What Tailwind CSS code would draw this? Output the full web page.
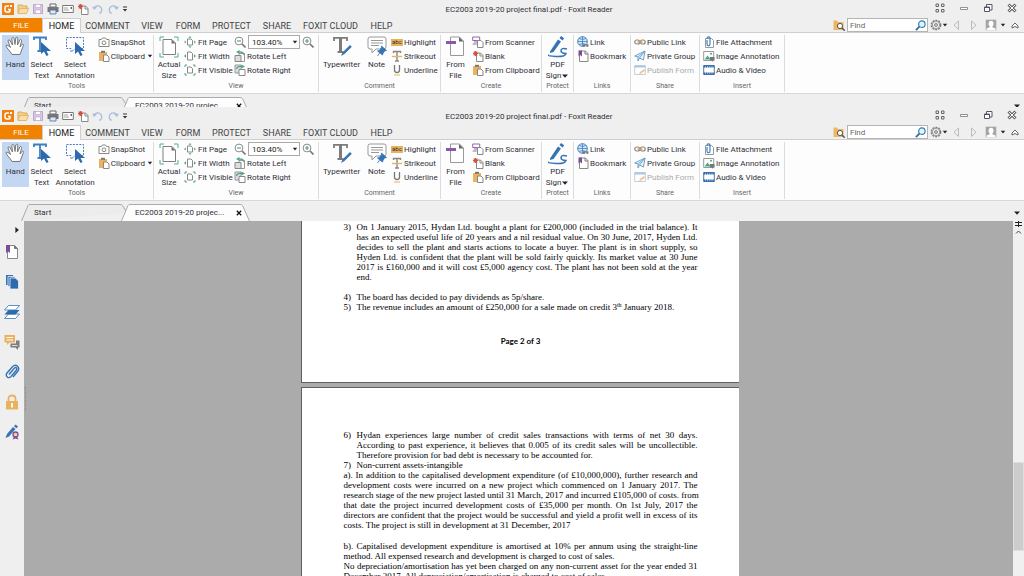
<!DOCTYPE html>
<html lang="en">
<head>
    <meta charset="UTF-8">
    <meta name="viewport" content="width=device-width, initial-scale=1.0">
    <title>EC2003 2019-20 project final.pdf - Foxit Reader</title>
    <script src="https://cdn.jsdelivr.net/npm/@tailwindcss/browser@4"></script>
</head>
<body class="h-screen flex flex-col overflow-hidden bg-[#efefef] text-[#303038] text-[8px] leading-[11px] font-['Roboto','Noto_Sans',sans-serif]">

    <!-- icon set -->
    <svg class="hidden">
        <symbol id="i-logo" viewBox="0 0 12 12"><rect width="12" height="12" fill="#f08010"/><path d="M7 3H5Q3 3 3 5v2q0 2 2 2h2q1 0 1-1V6.500H6" fill="none" stroke="#fff" stroke-width="1.500"/><path d="M8 2h2v2H8z" fill="#fff"/></symbol>
        <symbol id="i-open" viewBox="0 0 12 12"><path d="M1 10V2h4l1 1h4v2" fill="#f3d08c" stroke="#dca951"/><path d="M1 10.500L3 5.500h8.500L9.500 10.500z" fill="#f8e0ae" stroke="#e6b565"/></symbol>
        <symbol id="i-save" viewBox="0 0 12 12"><path d="M1.500 1.500h9v9h-9z" fill="#d9c8e2" stroke="#bda5cb"/><path d="M3.500 1.500h5v3h-5zM3.500 7h5v3.500h-5z" fill="#fff" stroke="#bda5cb" stroke-width=".6"/></symbol>
        <symbol id="i-print" viewBox="0 0 12 12"><path d="M3 1h6v3H3z" fill="#fff" stroke="#666"/><path d="M.5 4h11v5H.5z" fill="#777"/><path d="M3 7h6v4H3z" fill="#d8e8f8" stroke="#4d6f94" stroke-width=".8"/></symbol>
        <symbol id="i-mail" viewBox="0 0 12 12"><path d="M.7 2.500h10.600v7H.7z" fill="#fff" stroke="#777"/><path d="M2 5h4M2 7h5" stroke="#888" stroke-width=".8"/><path d="M8.500 4h1.500v2H8.500z" fill="#666"/></symbol>
        <symbol id="i-blank" viewBox="0 0 12 12"><path d="M4.500 3h4l2.500 2.500v6H4.500z" fill="#fff" stroke="#888"/><path d="M8 3v3h3" fill="none" stroke="#888"/><path d="M3.500 1v5M1 3.500h5M1.700 1.700l3.600 3.600M5.300 1.700L1.700 5.300" stroke="#d65240" stroke-width="1.200"/></symbol>
        <symbol id="i-undo" viewBox="0 0 12 12"><path d="M2 5.500A4 4 0 1 1 7.500 10.500" fill="none" stroke="#a9bfdb" stroke-width="1.400"/><path d="M0 3.500l2 3.500 3-2.500z" fill="#a9bfdb"/></symbol>
        <symbol id="i-hand" viewBox="0 0 20 20"><path d="M7 18.500C5 15 2 12.500 1 10c0-1.500 2-1 4.500 1.500L3 5c0-1.500 1.800-1.500 2.300 0L7.500 9 6.800 2.500c.2-1.500 1.900-1.300 2.200 0L10 8.500l.8-6.500c.3-1.200 2-1 2 .3L12.500 9l2.300-5c.7-1.100 2-.5 1.800.8L15 11l2-2.500c1-.8 2-.1 1.400 1L15 18.500z" fill="#fff" stroke="#777"/></symbol>
        <symbol id="i-text" viewBox="0 0 20 20"><path d="M2 4V1.500h12V4M8 1.500V15M5.500 15h5" fill="none" stroke="#3f7fc0" stroke-width="1.800"/><path d="M9 6v12l3-2.500L14.500 20l2-1-2-4H19z" fill="#2c69ad"/></symbol>
        <symbol id="i-annot" viewBox="0 0 20 20"><path d="M1.500 1.500h17v11h-8L6 16v-3.500H1.500z" fill="none" stroke="#3f7fc0" stroke-dasharray="2 1.200"/><path d="M10 6v12l3-2.500L15.500 20l2-1-2-4H20z" fill="#2c69ad"/></symbol>
        <symbol id="i-camera" viewBox="0 0 12 12"><path d="M1 3.500h2.500L4.500 2h3l1 1.500H11v7H1z" fill="#fff" stroke="#888"/><circle cx="6" cy="6.800" r="1.900" fill="none" stroke="#888"/></symbol>
        <symbol id="i-clip" viewBox="0 0 12 12"><path d="M1 2h8v9H1z" fill="#eab25f"/><path d="M3 .8h4v2H3z" fill="#777"/><path d="M5.500 5h3.500l2 2v4.500H5.500z" fill="#fff" stroke="#888"/></symbol>
        <symbol id="i-actual" viewBox="0 0 20 22"><path d="M1 5V1h4M15 1h4v4M19 17v4h-4M5 21H1v-4" fill="none" stroke="#58ad90"/><path d="M4 3.500h9l3.500 3.500v11.500H4z" fill="#fff" stroke="#808080"/><path d="M12.500 3.500L16.500 7.500h-4z" fill="#707070"/></symbol>
        <symbol id="i-fitpage" viewBox="0 0 12 12"><path d="M3.500 3h3.500l1.500 1.500V9h-5z" fill="#fff" stroke="#888"/><path d="M6 0l1.500 1.800h-3zM6 12l1.500-1.800h-3zM0 6l1.800-1.500v3zM12 6l-1.800-1.500v3z" fill="#4fa58a"/></symbol>
        <symbol id="i-fitwidth" viewBox="0 0 12 12"><path d="M3.500 2h3.500l1.500 1.500V10h-5z" fill="#fff" stroke="#888"/><path d="M0 6l2-1.800v3.600zM12 6l-2-1.800v3.600z" fill="#4fa58a"/></symbol>
        <symbol id="i-fitvis" viewBox="0 0 12 12"><path d="M3.500 3h3.500l1.500 1.500V9h-5z" fill="#fff" stroke="#888"/><path d="M1 3V1h2M9 1h2v2M11 9v2H9M3 11H1V9" fill="none" stroke="#4fa58a"/></symbol>
        <symbol id="i-zoomout" viewBox="0 0 12 12"><circle cx="5" cy="5" r="3.900" fill="#fff" stroke="#8a8a8a"/><path d="M8 8l3.500 3.500" stroke="#777" stroke-width="1.600"/><path d="M3 5h4" stroke="#4fa58a" stroke-width="1.200"/></symbol>
        <symbol id="i-zoomin" viewBox="0 0 12 12"><circle cx="5" cy="5" r="3.900" fill="#fff" stroke="#8a8a8a"/><path d="M8 8l3.500 3.500" stroke="#777" stroke-width="1.600"/><path d="M3 5h4M5 3v4" stroke="#4fa58a" stroke-width="1.200"/></symbol>
        <symbol id="i-rotleft" viewBox="0 0 12 12"><path d="M5 3.500h5.500v8H5z" fill="#fff" stroke="#999"/><path d="M1 5.500h6v6H1z" fill="#ddd" stroke="#888"/><path d="M10.500 5Q9 1.500 4.500 2" fill="none" stroke="#4fa58a" stroke-width="1.300"/><path d="M5.500 0v4L2 2z" fill="#4fa58a"/></symbol>
        <symbol id="i-rotright" viewBox="0 0 12 12"><path d="M1 1h6v8H1z" fill="#ddd" stroke="#999"/><path d="M5 5.500h6v6H5z" fill="#fff" stroke="#888"/><path d="M2.500 5Q3 2 8 2.500" fill="none" stroke="#4fa58a" stroke-width="1.300"/><path d="M7.500.5v4L11 2.500z" fill="#4fa58a"/></symbol>
        <symbol id="i-type" viewBox="0 0 20 20"><path d="M2 5V1.800h13V5M5.500 16h6" fill="none" stroke="#7c7c7c" stroke-width="1.800"/><path d="M8.500 1.500v15" stroke="#7c7c7c" stroke-width="3"/><path d="M9 20l1.500-3.500L18 9l1.800 1.800L12.500 18z" fill="#3573b5"/></symbol>
        <symbol id="i-note" viewBox="0 0 20 20"><path d="M3 1h14q2 0 2 2v8q0 2-2 2H9l-4 4v-4H3q-2 0-2-2V3q0-2 2-2z" fill="#fff" stroke="#999"/><path d="M4 4.500h12M4 7h12M4 9.500h8" stroke="#999"/><path d="M14.500 10l5 4.500-2 .5-1.500 2.500L15.500 19l-5-4 1.800-.4 2-2.600zM13 16.500L10.500 20" fill="#3573b5" stroke="#3573b5" stroke-width=".8"/></symbol>
        <symbol id="i-strike" viewBox="0 0 12 12"><path d="M2.500 3V1.500h7V3M6 1.500V11M4 11h4" fill="none" stroke="#888" stroke-width="1.400"/><path d="M1 6.500h10" stroke="#eab25f" stroke-width="1.400"/></symbol>
        <symbol id="i-under" viewBox="0 0 12 12"><path d="M3.500 1v5q0 2.500 2.500 2.500T8.500 6V1" fill="none" stroke="#777" stroke-width="1.300"/><path d="M3 11h6" stroke="#eab25f"/></symbol>
        <symbol id="i-fromfile" viewBox="0 0 20 20"><path d="M4.500 1h9l4 4v14.500h-13z" fill="#fff" stroke="#999"/><path d="M13 1v4.500h4.500z" fill="#666"/><path d="M0 5h10v3H0z" fill="#8b59ab"/></symbol>
        <symbol id="i-scan" viewBox="0 0 12 12"><path d="M.7 1h7v3.500h-7zM2 6h3M.7 8h4" fill="#fff" stroke="#9464b2"/><path d="M5.500 4.500h3.500l2 2v5H5.500z" fill="#fff" stroke="#888"/></symbol>
        <symbol id="i-sign" viewBox="0 0 20 22"><path d="M2 15.500L10 3.500l3 2L5.500 16 2 17z" fill="#3573b5"/><path d="M11.500 2L13 0l3.200 2.200L14.500 4.500z" fill="#3573b5"/><path d="M19 13q-6-1.500-6 1.500t5 3Q17 21 8 20.500T1 19" fill="none" stroke="#3573b5" stroke-width="1.500"/></symbol>
        <symbol id="i-link" viewBox="0 0 12 12"><circle cx="5.500" cy="5.500" r="4.800" fill="#d9e8f6" stroke="#3f7fc0"/><path d="M.7 5.500h9.600M5.500.7v9.600M2 2.500q3.500 2 7 0M2 8.500q3.500-2 7 0" fill="none" stroke="#3f7fc0" stroke-width=".8"/><path d="M6 9.500h5.500" stroke="#777" stroke-width="2.500" stroke-dasharray="2.200 1"/></symbol>
        <symbol id="i-bookmark" viewBox="0 0 12 12"><path d="M3.500 1h5L11 3.500v8H2.500V1z" fill="#fff" stroke="#888"/><path d="M8 1v3h3" fill="none" stroke="#777"/><path d="M1.500.5h3.500V6.500L3.200 5 1.500 6.500z" fill="#7d4c9c"/></symbol>
        <symbol id="i-chain" viewBox="0 0 12 12"><rect x=".8" y="4" width="5" height="4" rx="2" fill="none" stroke="#888" stroke-width="1.200"/><rect x="6.200" y="4" width="5" height="4" rx="2" fill="none" stroke="#888" stroke-width="1.200"/><path d="M3.500 6h5" stroke="#e39a3c" stroke-width="1.500"/></symbol>
        <symbol id="i-plane" viewBox="0 0 12 12"><path d="M.7 6L11 1 9.500 10 5.500 8 4 11V7z" fill="#eaf3fa" stroke="#5b9bc9" stroke-width=".9"/><path d="M4 7l7-6-5.500 7" fill="none" stroke="#5b9bc9" stroke-width=".8"/></symbol>
        <symbol id="i-publish" viewBox="0 0 12 12"><path d="M.7 1.500h10.600v9H.7z" fill="#fff" stroke="#c5cfda"/><path d="M.7 1.500h10.600v2H.7z" fill="#a9c8e4"/><path d="M5 10.500l1-2.500 4-3 1.200 1.500-4 3z" fill="#f0c59b"/></symbol>
        <symbol id="i-attach" viewBox="0 0 12 12"><path d="M2.500 2.500h6l2 2v7h-8z" fill="#fff" stroke="#999"/><path d="M4 4v4q0 1.800 1.500 1.800T7 8V2.500Q7 .8 5.500.8T4 2.500" fill="none" stroke="#3f7fc0" stroke-width="1.200"/></symbol>
        <symbol id="i-image" viewBox="0 0 12 12"><path d="M.7 1.500h10v9h-10z" fill="#fff" stroke="#999"/><path d="M1.500 9.500l3-4 2 2.500 1-1v2.500z" fill="#4fa58a"/><circle cx="8" cy="3.800" r="1" fill="#4fa58a"/><path d="M7 7h4.500v3.500H10L9 12v-1.500H7z" fill="#777"/></symbol>
        <symbol id="i-video" viewBox="0 0 12 12"><path d="M.7 1.500h10.600v9H.7z" fill="#fff" stroke="#3f7fc0"/><path d="M.7 2.500h10.600M.7 9.500h10.600" stroke="#2c5f98" stroke-width="1.800" stroke-dasharray="1.400 .5"/></symbol>
        <symbol id="i-folderfind" viewBox="0 0 12 12"><path d="M.5 11V1.500h3.500l1 1.500h5.500v8z" fill="#eeb765"/><circle cx="7" cy="7" r="2.600" fill="#fff" stroke="#555"/><path d="M9 9l2.700 2.700" stroke="#555" stroke-width="1.400"/></symbol>
        <symbol id="i-search" viewBox="0 0 12 12"><circle cx="7.500" cy="4.500" r="3.500" fill="#e8f4fc" stroke="#2f7fb5" stroke-width="1.300"/><path d="M5 7L1 11" stroke="#2f6fa8" stroke-width="2"/></symbol>
        <symbol id="i-gear" viewBox="0 0 12 12"><circle cx="6" cy="6" r="4.700" fill="none" stroke="#777" stroke-width="1.300" stroke-dasharray="2 1"/><circle cx="6" cy="6" r="3.700" fill="none" stroke="#888" stroke-width=".8"/><circle cx="6" cy="6" r="1.400" fill="none" stroke="#777"/></symbol>
        <symbol id="i-prev" viewBox="0 0 12 12"><path d="M8.500 2v8.500L4 6.200z" fill="none" stroke="#bbb"/></symbol>
        <symbol id="i-next" viewBox="0 0 12 12"><path d="M3.500 2v8.500L8 6.200z" fill="none" stroke="#bbb"/></symbol>
        <symbol id="i-user" viewBox="0 0 12 12"><path d="M.7.7h10.600v10.600H.7z" fill="#a5a5a5"/><path d="M6 1.800q2.500 0 2.500 2.600T7 7.500q0 1 3.500 2v1.800h-9V9.500q3.500-1 3.500-2-1.500-.8-1.500-3.100T6 1.800z" fill="#fff"/></symbol>
        <symbol id="i-up" viewBox="0 0 12 12"><path d="M3 7l3-3 3 3v2L6 7.500 3 9z" fill="#fff" stroke="#555" stroke-width=".9"/></symbol>
        <symbol id="i-caret" viewBox="0 0 6 6"><path d="M.8 1.800h4.400L3 4.400z" fill="#222"/></symbol>
        <symbol id="i-qat" viewBox="0 0 6 8"><path d="M1 2h4" stroke="#333"/><path d="M.8 4h4.400L3 6.500z" fill="#333"/></symbol>
        <symbol id="i-grid" viewBox="0 0 12 12"><path d="M2 2h2.500v2.500H2zM7.500 2H10v2.500H7.500zM2 7.500h2.500V10H2zM7.500 7.500H10V10H7.500z" fill="none" stroke="#666"/></symbol>
        <symbol id="i-min" viewBox="0 0 12 12"><path d="M2.500 5.500h7v2h-7z" fill="#fff" stroke="#777" stroke-width=".8"/></symbol>
        <symbol id="i-restore" viewBox="0 0 12 12"><path d="M4.500 2.500h5.500v5.500H4.500z" fill="#fff" stroke="#556"/><path d="M2.500 5h5v4.500h-5z" fill="#fff" stroke="#556"/><path d="M2.500 5.500h5" stroke="#556"/></symbol>
        <symbol id="i-close" viewBox="0 0 12 12"><path d="M2.500 2.500l7 7M9.500 2.500l-7 7" stroke="#666" stroke-width="3"/><path d="M2.800 2.800l6.400 6.400M9.200 2.800L2.800 9.200" stroke="#fff"/></symbol>
        <symbol id="i-x" viewBox="0 0 6 6"><path d="M.8.800l4.400 4.400M5.200.800L.8 5.200" stroke="#111" stroke-width="1.300"/></symbol>
        <symbol id="s-bookmark" viewBox="0 0 16 16"><path d="M3.500 1.500h7l3 3v10h-10z" fill="#fff" stroke="#888"/><path d="M10.500 1.500v3h3z" fill="#777" stroke="#777"/><path d="M2 1h4v8L4 7.500 2 9z" fill="#7d4c9c"/></symbol>
        <symbol id="s-pages" viewBox="0 0 16 16"><path d="M2 1h7v10H2z" fill="#3573b5"/><path d="M4 2.500h7v10H4z" fill="#3573b5" stroke="#efefef" stroke-width=".8"/><path d="M6 4h5.500l3 3V15H6z" fill="#2c69ad" stroke="#efefef" stroke-width=".8"/></symbol>
        <symbol id="s-layers" viewBox="0 0 16 16"><path d="M4.500 10h11l-4 4.500H.5z" fill="#fff" stroke="#3573b5" stroke-width=".8"/><path d="M4.500 6h11l-4 4.500H.5z" fill="#2c69ad"/><path d="M4.500 1.500h11l-4 4.500H.5z" fill="#fff" stroke="#3573b5" stroke-width=".8"/></symbol>
        <symbol id="s-comments" viewBox="0 0 16 16"><path d="M.5 1h10.500v7.500H5.500L3 11V8.500H.5z" fill="#eab25f"/><path d="M2.500 3.500h6.500M2.500 6h6.500" stroke="#fff"/><path d="M12 6.500h3.500v7H14V16l-2.500-2.500h-5v-4H12z" fill="#7d7d7d"/><path d="M8 11.500h5.500" stroke="#ddd"/></symbol>
        <symbol id="s-clip" viewBox="0 0 16 16"><path d="M5 10.500L10.500 4q1.200-1 2 0t-.2 2.200L7 12.500q-2 2-3.800.4T3 9l5.500-6.300q2.700-2.500 5-.4t.3 5L9 13" fill="none" stroke="#3573b5" stroke-width="1.400"/></symbol>
        <symbol id="s-lock" viewBox="0 0 16 16"><path d="M4.500 7.500V4.800Q4.500 1.500 8 1.500t3.500 3.300v2.700" fill="none" stroke="#eab25f" stroke-width="1.800"/><path d="M2 7h12v8.500H2z" fill="#eab25f"/><path d="M8 9v4.500" stroke="#fff" stroke-width="1.800"/></symbol>
        <symbol id="s-sign" viewBox="0 0 16 16"><path d="M1.500 14l1.500-4L9 3l2.500 2L5 12.500z" fill="#3573b5"/><path d="M10 2.200L11.500.5l2.500 2L12.500 4.200z" fill="#3573b5"/><circle cx="11.500" cy="10.500" r="2.500" fill="#f3d08c" stroke="#7d4c9c" stroke-width="1.300"/><path d="M8.500 15.500l1.500-3h3l1.500 3-3-1z" fill="#7d4c9c"/></symbol>
    </svg>

    <!-- window header, drawn twice by the script below -->
    <template id="header-template">
        <!-- title bar -->
        <div class="h-[18px] flex items-center pl-[2px] pr-[6px]">
            <div class="flex-1 flex items-center gap-[3px]">
                <svg class="size-3"><use href="#i-logo"/></svg>
                <button aria-label="Open"><svg class="size-3"><use href="#i-open"/></svg></button>
                <button aria-label="Save"><svg class="size-3"><use href="#i-save"/></svg></button>
                <button aria-label="Print"><svg class="size-3"><use href="#i-print"/></svg></button>
                <button aria-label="Email"><svg class="size-3"><use href="#i-mail"/></svg></button>
                <button aria-label="New"><svg class="size-3"><use href="#i-blank"/></svg></button>
                <button aria-label="Undo"><svg class="size-3"><use href="#i-undo"/></svg></button>
                <button aria-label="Redo"><svg class="size-3 -scale-x-100"><use href="#i-undo"/></svg></button>
                <button aria-label="Customize toolbar"><svg class="w-[6px] h-2"><use href="#i-qat"/></svg></button>
            </div>
            <h1 class="ml-[38px]">EC2003 2019-20 project final.pdf - Foxit Reader</h1>
            <div class="flex-1 flex justify-end gap-3 pb-[3px]">
                <button aria-label="Ribbon display"><svg class="size-3"><use href="#i-grid"/></svg></button>
                <button aria-label="Minimize"><svg class="size-3"><use href="#i-min"/></svg></button>
                <button aria-label="Restore"><svg class="size-3"><use href="#i-restore"/></svg></button>
                <button aria-label="Close"><svg class="size-3"><use href="#i-close"/></svg></button>
            </div>
        </div>

        <!-- ribbon tabs -->
        <div class="h-[15px] flex items-stretch border-b border-[#cfcfcf] text-[9px] text-[#444] pr-[3px]">
            <button class="w-[42px] bg-[#f08200] text-white text-[8px]">FILE</button>
            <nav class="flex items-stretch">
                <a href="#" class="w-[39px] -mb-px pt-[2px] text-center bg-[#fdfdfd] border-x border-t border-[#cfcfcf] text-[#222]">HOME</a>
                <a href="#" class="w-[53px] pt-[3px] text-center">COMMENT</a>
                <a href="#" class="w-9 pt-[3px] text-center">VIEW</a>
                <a href="#" class="w-9 pt-[3px] text-center">FORM</a>
                <a href="#" class="w-[51px] pt-[3px] text-center">PROTECT</a>
                <a href="#" class="w-10 pt-[3px] text-center">SHARE</a>
                <a href="#" class="w-[67px] pt-[3px] text-center">FOXIT CLOUD</a>
                <a href="#" class="w-[35px] pt-[3px] text-center">HELP</a>
            </nav>
            <div class="ml-auto flex items-center">
                <button aria-label="Search in folder" class="mr-[2px]"><svg class="size-3"><use href="#i-folderfind"/></svg></button>
                <div class="w-[81px] h-[14px] flex items-center bg-white border border-[#b5b5b5] pl-[2px] pr-px mr-[2px]">
                    <input type="text" placeholder="Find" aria-label="Find" class="flex-1 min-w-0 text-[8px] leading-[11px] placeholder:text-[#666]">
                    <button aria-label="Search"><svg class="size-[11px]"><use href="#i-search"/></svg></button>
                </div>
                <button aria-label="Settings" class="flex items-center mr-[2px]"><svg class="size-3"><use href="#i-gear"/></svg><svg class="size-[6px]"><use href="#i-caret"/></svg></button>
                <button aria-label="Previous" class="mr-[6px]"><svg class="size-3"><use href="#i-prev"/></svg></button>
                <button aria-label="Next" class="mr-[5px]"><svg class="size-3"><use href="#i-next"/></svg></button>
                <button aria-label="Account" class="flex items-center gap-[3px] mr-[3px]"><svg class="size-3"><use href="#i-user"/></svg><svg class="size-[6px]"><use href="#i-caret"/></svg></button>
                <button aria-label="Collapse ribbon"><svg class="size-3"><use href="#i-up"/></svg></button>
            </div>
        </div>

        <!-- ribbon -->
        <div class="h-[61px] flex pt-[2px] pb-px bg-[#fdfdfd] border-b border-[#d8d8d8]">
            <section class="w-[154px] flex flex-col justify-between border-r border-[#dcdcdc]">
                <div class="flex items-start">
                    <button class="w-[27px] h-[45px] ml-[2px] flex flex-col items-center pt-px bg-[#c3d6f2]"><svg class="size-5 mb-[3px]"><use href="#i-hand"/></svg>Hand</button>
                    <button class="w-[26px] flex flex-col items-center pt-px"><svg class="size-5 mb-[3px]"><use href="#i-text"/></svg>Select<br>Text</button>
                    <button class="w-[42px] flex flex-col items-center pt-px"><svg class="size-5 mb-[3px]"><use href="#i-annot"/></svg>Select<br>Annotation</button>
                    <div class="ml-[2px]">
                        <button class="h-[14px] flex items-center gap-px"><svg class="size-3"><use href="#i-camera"/></svg>SnapShot</button>
                        <button class="h-[14px] flex items-center gap-px"><svg class="size-3"><use href="#i-clip"/></svg>Clipboard<svg class="size-[6px] ml-px"><use href="#i-caret"/></svg></button>
                    </div>
                </div>
                <h2 class="text-center text-[7px] text-[#666]">Tools</h2>
            </section>
            <section class="w-[165px] flex flex-col justify-between border-r border-[#dcdcdc]">
                <div class="flex items-start">
                    <button class="w-[26px] ml-[2px] flex flex-col items-center pt-px"><svg class="w-5 h-[22px] mb-px"><use href="#i-actual"/></svg>Actual<br>Size</button>
                    <div class="ml-[2px] w-[50px]">
                        <button class="h-[14px] flex items-center gap-[2px]"><svg class="size-3"><use href="#i-fitpage"/></svg>Fit Page</button>
                        <button class="h-[14px] flex items-center gap-[2px]"><svg class="size-3"><use href="#i-fitwidth"/></svg>Fit Width</button>
                        <button class="h-[14px] flex items-center gap-[2px]"><svg class="size-3"><use href="#i-fitvis"/></svg>Fit Visible</button>
                    </div>
                    <div>
                        <div class="h-[14px] flex items-center gap-[2px]">
                            <button aria-label="Zoom out"><svg class="size-3"><use href="#i-zoomout"/></svg></button>
                            <div class="relative w-[52px] h-[14px]">
                                <select aria-label="Zoom" class="appearance-none w-full h-full border border-[#aaa] bg-white pl-[3px] text-[8px] leading-[11px] text-[#222]"><option>103.40%</option></select>
                                <svg class="absolute right-[2px] top-1 size-[6px] pointer-events-none"><use href="#i-caret"/></svg>
                            </div>
                            <button aria-label="Zoom in"><svg class="size-3"><use href="#i-zoomin"/></svg></button>
                        </div>
                        <button class="h-[14px] flex items-center gap-px"><svg class="size-3"><use href="#i-rotleft"/></svg>Rotate Left</button>
                        <button class="h-[14px] flex items-center gap-px"><svg class="size-3"><use href="#i-rotright"/></svg>Rotate Right</button>
                    </div>
                </div>
                <h2 class="text-center text-[7px] text-[#666]">View</h2>
            </section>
            <section class="w-[122px] flex flex-col justify-between border-r border-[#dcdcdc]">
                <div class="flex items-start">
                    <button class="w-[45px] flex flex-col items-center pt-px"><svg class="size-5 mb-[3px]"><use href="#i-type"/></svg>Typewriter</button>
                    <button class="w-[25px] flex flex-col items-center pt-px"><svg class="size-5 mb-[3px]"><use href="#i-note"/></svg>Note</button>
                    <div class="ml-[2px]">
                        <button class="h-[14px] flex items-center gap-px"><span class="w-3 h-[7px] bg-[#eab25f] text-[6px] leading-[6px] text-center">abc</span>Highlight</button>
                        <button class="h-[14px] flex items-center gap-px"><svg class="size-3"><use href="#i-strike"/></svg>Strikeout</button>
                        <button class="h-[14px] flex items-center gap-px"><svg class="size-3"><use href="#i-under"/></svg>Underline</button>
                    </div>
                </div>
                <h2 class="text-center text-[7px] text-[#666]">Comment</h2>
            </section>
            <section class="w-[101px] flex flex-col justify-between border-r border-[#dcdcdc]">
                <div class="flex items-start">
                    <button class="w-[29px] flex flex-col items-center pt-px"><svg class="size-5 mb-[3px]"><use href="#i-fromfile"/></svg>From<br>File</button>
                    <div class="ml-[2px]">
                        <button class="h-[14px] flex items-center gap-px"><svg class="size-3"><use href="#i-scan"/></svg>From Scanner</button>
                        <button class="h-[14px] flex items-center gap-px"><svg class="size-3"><use href="#i-blank"/></svg>Blank</button>
                        <button class="h-[14px] flex items-center gap-px"><svg class="size-3"><use href="#i-clip"/></svg>From Clipboard</button>
                    </div>
                </div>
                <h2 class="text-center text-[7px] text-[#666]">Create</h2>
            </section>
            <section class="w-8 flex flex-col justify-between border-r border-[#dcdcdc]">
                <button class="flex flex-col items-center pt-px"><svg class="w-5 h-[22px] mb-px"><use href="#i-sign"/></svg>PDF<span class="flex items-center">Sign<svg class="size-2"><use href="#i-caret"/></svg></span></button>
                <h2 class="text-center text-[7px] text-[#666]">Protect</h2>
            </section>
            <section class="w-[57px] flex flex-col justify-between border-r border-[#dcdcdc]">
                <div class="ml-[3px]">
                    <button class="h-[14px] flex items-center gap-px"><svg class="size-3"><use href="#i-link"/></svg>Link</button>
                    <button class="h-[14px] flex items-center gap-px"><svg class="size-3"><use href="#i-bookmark"/></svg>Bookmark</button>
                </div>
                <h2 class="text-center text-[7px] text-[#666]">Links</h2>
            </section>
            <section class="w-[69px] flex flex-col justify-between border-r border-[#dcdcdc]">
                <div class="ml-[3px]">
                    <button class="h-[14px] flex items-center gap-px"><svg class="size-3"><use href="#i-chain"/></svg>Public Link</button>
                    <button class="h-[14px] flex items-center gap-px"><svg class="size-3"><use href="#i-plane"/></svg>Private Group</button>
                    <button disabled class="h-[14px] flex items-center gap-px text-[#aaa]"><svg class="size-3"><use href="#i-publish"/></svg>Publish Form</button>
                </div>
                <h2 class="text-center text-[7px] text-[#666]">Share</h2>
            </section>
            <section class="w-[85px] flex flex-col justify-between border-r border-[#dcdcdc]">
                <div class="ml-[3px]">
                    <button class="h-[14px] flex items-center gap-px"><svg class="size-3"><use href="#i-attach"/></svg>File Attachment</button>
                    <button class="h-[14px] flex items-center gap-px"><svg class="size-3"><use href="#i-image"/></svg>Image Annotation</button>
                    <button class="h-[14px] flex items-center gap-px"><svg class="size-3"><use href="#i-video"/></svg>Audio &amp; Video</button>
                </div>
                <h2 class="text-center text-[7px] text-[#666]">Insert</h2>
            </section>
        </div>

        <!-- document tabs -->
        <div class="h-5 flex items-end pl-[21px] pr-[3px]">
            <div class="relative w-[106px] h-[17px] flex items-center pl-[13px]">
                <svg class="absolute inset-0 w-full h-full" viewBox="0 0 106 17"><path d="M.5 17L7 1.500Q7.500.5 9 .5h90q2 0 2.500 1L106 9" fill="#ececec" stroke="#aaa"/></svg>
                <a href="#" class="relative">Start</a>
            </div>
            <div class="relative -ml-[6px] w-[129px] h-[17px] flex items-center pl-[14px]">
                <svg class="absolute inset-0 w-full h-full" viewBox="0 0 129 17"><path d="M.5 17L7 1.500Q7.500.5 9 .5h110q2 0 2.500 1L128.500 17" fill="#fdfdfd" stroke="#aaa"/></svg>
                <a href="#" class="relative">EC2003 2019-20 projec...</a>
                <button aria-label="Close tab" class="relative ml-auto mr-2"><svg class="size-[6px]"><use href="#i-x"/></svg></button>
            </div>
            <button aria-label="Tab list" class="ml-auto mb-1"><svg class="size-2"><use href="#i-caret"/></svg></button>
        </div>
    </template>

    <header class="h-[107px] shrink-0 overflow-hidden" data-header></header>
    <header class="shrink-0" data-header></header>

    <div class="flex-1 min-h-0 flex">
        <!-- navigation panel -->
        <aside class="w-6 flex flex-col items-center gap-[14px] pt-[5px]">
            <button aria-label="Expand panel" class="self-end mr-[3px]"><svg class="size-2 -rotate-90"><use href="#i-caret"/></svg></button>
            <button aria-label="Bookmarks" class="-mt-1"><svg class="size-4"><use href="#s-bookmark"/></svg></button>
            <button aria-label="Pages"><svg class="size-4"><use href="#s-pages"/></svg></button>
            <button aria-label="Layers"><svg class="size-4"><use href="#s-layers"/></svg></button>
            <button aria-label="Comments"><svg class="size-4"><use href="#s-comments"/></svg></button>
            <button aria-label="Attachments"><svg class="size-4"><use href="#s-clip"/></svg></button>
            <button aria-label="Security"><svg class="size-4"><use href="#s-lock"/></svg></button>
            <button aria-label="Signatures"><svg class="size-4"><use href="#s-sign"/></svg></button>
        </aside>

        <main class="flex-1 flex bg-[#ababab] overflow-hidden">
            <div class="self-center ml-px h-6 border-l border-dotted border-[#8a8a8a]"></div>
            <div class="w-[438px] mx-auto text-black text-[9px] leading-[10px] font-['Liberation_Serif',serif]">
                <article class="h-[162px] bg-white border-l border-b border-[#606060] pl-[42px] pr-[41px] pt-px">
                    <div class="flex">
                        <span class="w-[13px]">3)</span>
                        <p class="flex-1 text-justify">On 1 January 2015, Hydan Ltd. bought a plant for £200,000 (included in the trial balance). It has an expected useful life of 20 years and a nil residual value. On 30 June, 2017, Hyden Ltd. decides to sell the plant and starts actions to locate a buyer. The plant is in short supply, so Hyden Ltd. is confident that the plant will be sold fairly quickly. Its market value at 30 June 2017 is £160,000 and it will cost £5,000 agency cost. The plant has not been sold at the year end.</p>
                    </div>
                    <div class="flex mt-[10px]">
                        <span class="w-[13px]">4)</span>
                        <p class="flex-1">The board has decided to pay dividends as 5p/share.</p>
                    </div>
                    <div class="flex">
                        <span class="w-[13px]">5)</span>
                        <p class="flex-1">The revenue includes an amount of £250,000 for a sale made on credit 3<sup class="text-[6px] leading-none">th</sup> January 2018.</p>
                    </div>
                    <p class="mt-6 text-center text-[8px] font-bold font-['Lato',sans-serif]">Page 2 of 3</p>
                </article>
                <article class="mt-1 bg-white border-l border-t border-[#606060] pl-[42px] pr-[41px] pt-[42px]">
                    <div class="flex">
                        <span class="w-[13px]">6)</span>
                        <p class="flex-1 text-justify">Hydan experiences large number of credit sales transactions with terms of net 30 days. According to past experience, it believes that 0.005 of its credit sales will be uncollectible. Therefore provision for bad debt is necessary to be accounted for.</p>
                    </div>
                    <div class="flex">
                        <span class="w-[13px]">7)</span>
                        <p class="flex-1">Non-current assets-intangible</p>
                    </div>
                    <p class="text-justify">a). In addition to the capitalised development expenditure (of £10,000,000), further research and development costs were incurred on a new project which commenced on 1 January 2017. The <span class="whitespace-nowrap">research stage of the new project lasted until 31 March, 2017 and incurred £105,000 of costs. from</span> that date the project incurred development costs of £35,000 per month. On 1st July, 2017 the directors are confident that the project would be successful and yield a profit well in excess of its costs. The project is still in development at 31 December, 2017</p>
                    <p class="mt-[11px] text-justify">b). Capitalised development expenditure is amortised at 10% per annum using the straight-line method. All expensed research and development is charged to cost of sales.</p>
                    <p class="text-justify">No depreciation/amortisation has yet been charged on any non-current asset for the year ended 31 December 2017. All depreciation/amortisation is charged to cost of sales.</p>
                </article>
            </div>
        </main>

        <!-- scroll bar -->
        <div class="w-[11px] flex flex-col items-center bg-[#f0f0f0]">
            <svg class="w-[11px] h-4 shrink-0" viewBox="0 0 11 16"><path d="M2 1.500h7M2 4.500h7M5.500 0v6" stroke="#222"/><path d="M3 12.500l2.500-2.500 2.500 2.500" fill="none" stroke="#444"/></svg>
            <div class="grow-[226]"></div>
            <div class="grow-[88] w-full bg-[#cdcdcd] border border-[#dedede]"></div>
            <div class="grow-[25]"></div>
        </div>
    </div>

    <script>
        const template = document.getElementById('header-template');
        document.querySelectorAll('[data-header]').forEach(function (header) {
            header.appendChild(template.content.cloneNode(true));
        });
    </script>
</body>
</html>
